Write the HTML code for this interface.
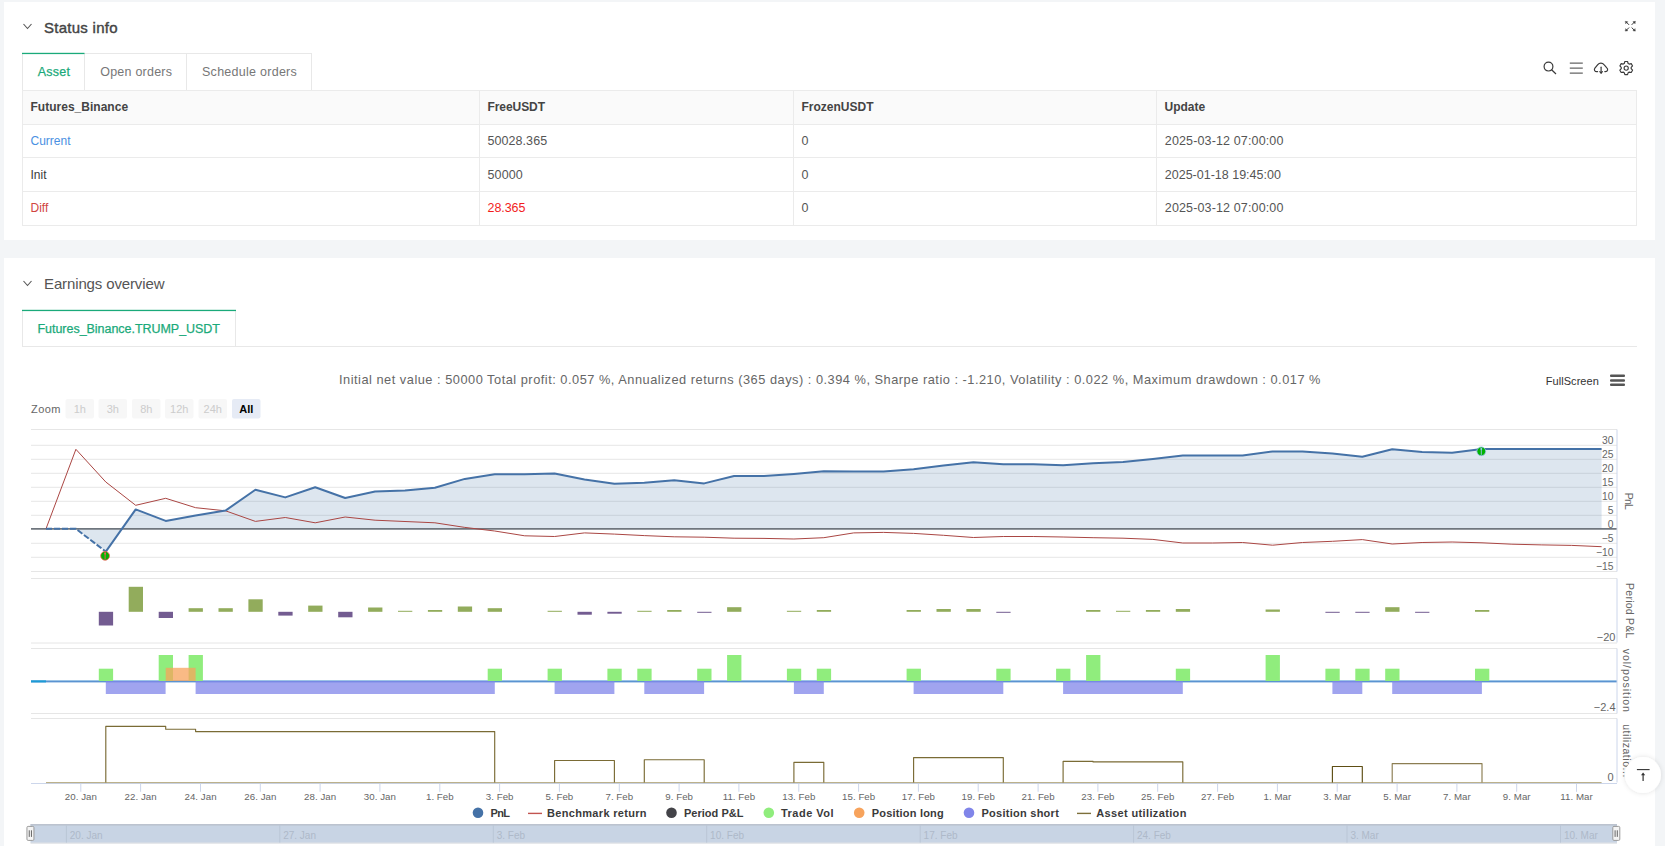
<!DOCTYPE html>
<html><head><meta charset="utf-8"><style>
html,body{margin:0;padding:0;}
body{width:1665px;height:846px;overflow:hidden;background:#f3f5f7;position:relative;font-family:"Liberation Sans",sans-serif;}
.card{position:absolute;background:#fff;}
svg{position:absolute;left:0;top:0;}
text{font-family:"Liberation Sans",sans-serif;}
</style></head><body>
<div class="card" style="left:4px;top:2px;width:1651px;height:238px"></div>
<div class="card" style="left:4px;top:258px;width:1651px;height:600px"></div>
<svg width="1665" height="846" viewBox="0 0 1665 846">
<path d="M23.5 24 L27.5 28.5 L31.5 24" fill="none" stroke="#555" stroke-width="1.1"/>
<text x="44" y="33.2" font-size="15" fill="#444" font-weight="normal" text-anchor="start" stroke="#444" stroke-width="0.4" textLength="73.5" lengthAdjust="spacing">Status info</text>
<g stroke="#3a3a3a" stroke-width="1" fill="#3a3a3a" stroke-linecap="round"><path d="M1628.8 24.6 L1626.3 22.1" fill="none"/><path d="M1625.6 21.4 L1627.7 21.7 L1625.9 23.5Z" stroke-width="0.5"/><path d="M1631.9 24.6 L1634.4 22.1" fill="none"/><path d="M1635.1 21.4 L1633.0 21.7 L1634.8 23.5Z" stroke-width="0.5"/><path d="M1628.8 27.8 L1626.3 30.3" fill="none"/><path d="M1625.6 31.0 L1627.7 30.7 L1625.9 28.9Z" stroke-width="0.5"/><path d="M1631.9 27.8 L1634.4 30.3" fill="none"/><path d="M1635.1 31.0 L1633.0 30.7 L1634.8 28.9Z" stroke-width="0.5"/></g>
<rect x="22.5" y="53.5" width="289" height="37" fill="#fff" stroke="#e8e8e8"/>
<line x1="84.5" y1="53" x2="84.5" y2="90" stroke="#e8e8e8"/>
<line x1="186.5" y1="53" x2="186.5" y2="90" stroke="#e8e8e8"/>
<rect x="22" y="52.8" width="62.5" height="1.3" fill="#1aaa7a"/>
<text x="37.8" y="76" font-size="12.5" fill="#1aaa7a" font-weight="normal" text-anchor="start" stroke="#1aaa7a" stroke-width="0.25" textLength="32.2" lengthAdjust="spacing">Asset</text>
<text x="100.2" y="76" font-size="12.5" fill="#777" font-weight="normal" text-anchor="start"  textLength="71.8" lengthAdjust="spacing">Open orders</text>
<text x="202" y="76" font-size="12.5" fill="#777" font-weight="normal" text-anchor="start"  textLength="94.8" lengthAdjust="spacing">Schedule orders</text>
<g stroke="#3a3a3a" stroke-width="1.2" fill="none"><circle cx="1548.5" cy="66.6" r="4.4"/><path d="M1551.6 69.8 L1556 74"/></g><g stroke="#666" stroke-width="1.3"><path d="M1569.8 63.1 h13 M1569.8 68.1 h13 M1569.8 73.1 h13"/></g><g stroke="#3a3a3a" stroke-width="1.2" fill="none" stroke-linecap="round"><path d="M1597.6 71.6 H1596.8 C1594.6 71.6 1593.8 69.6 1594.9 68.2 L1597.8 64.6 C1599.4 62.6 1602.4 62.6 1604 64.6 L1606.6 67.6 C1608.4 69.2 1607.8 71.6 1605.4 71.6 H1604.8"/><path d="M1601.1 67.2 V73" /><path d="M1599.8 71.6 L1601.1 73 L1602.4 71.6"/></g>
<path d="M1624.87 61.53 L1627.53 61.53 L1628.15 63.49 L1629.21 64.11 L1631.22 63.66 L1632.55 65.97 L1631.16 67.48 L1631.16 68.72 L1632.55 70.23 L1631.22 72.54 L1629.21 72.09 L1628.15 72.71 L1627.53 74.67 L1624.87 74.67 L1624.25 72.71 L1623.19 72.09 L1621.18 72.54 L1619.85 70.23 L1621.24 68.72 L1621.24 67.48 L1619.85 65.97 L1621.18 63.66 L1623.19 64.11 L1624.25 63.49Z" fill="none" stroke="#3a3a3a" stroke-width="1.15" stroke-linejoin="round"/><circle cx="1626.2" cy="68.1" r="2.1" fill="none" stroke="#3a3a3a" stroke-width="1.1"/>
<rect x="22.5" y="90.5" width="1614" height="135" fill="#fff" stroke="#ebebeb"/>
<rect x="23" y="91" width="1613" height="33" fill="#fafafa"/>
<line x1="22" y1="124.5" x2="1637" y2="124.5" stroke="#ebebeb"/>
<line x1="22" y1="157.5" x2="1637" y2="157.5" stroke="#ebebeb"/>
<line x1="22" y1="191.5" x2="1637" y2="191.5" stroke="#ebebeb"/>
<line x1="479.5" y1="90" x2="479.5" y2="225" stroke="#ebebeb"/>
<line x1="793.5" y1="90" x2="793.5" y2="225" stroke="#ebebeb"/>
<line x1="1156.5" y1="90" x2="1156.5" y2="225" stroke="#ebebeb"/>
<text x="30.5" y="111" font-size="12" fill="#444" font-weight="bold" text-anchor="start"  textLength="97.6" lengthAdjust="spacing">Futures_Binance</text>
<text x="487.5" y="111" font-size="12" fill="#444" font-weight="bold" text-anchor="start"  textLength="57.5" lengthAdjust="spacing">FreeUSDT</text>
<text x="801.5" y="111" font-size="12" fill="#444" font-weight="bold" text-anchor="start" >FrozenUSDT</text>
<text x="1164.5" y="111" font-size="12" fill="#444" font-weight="bold" text-anchor="start" >Update</text>
<text x="30.5" y="145" font-size="12" fill="#4a90e2" font-weight="normal" text-anchor="start" >Current</text>
<text x="487.5" y="145" font-size="12.5" fill="#555" font-weight="normal" text-anchor="start"  textLength="59.6" lengthAdjust="spacing">50028.365</text>
<text x="801.5" y="145" font-size="12.5" fill="#555" font-weight="normal" text-anchor="start" >0</text>
<text x="30.5" y="179" font-size="12" fill="#3a3a3a" font-weight="normal" text-anchor="start" >Init</text>
<text x="487.5" y="179" font-size="12.5" fill="#555" font-weight="normal" text-anchor="start"  textLength="35.3" lengthAdjust="spacing">50000</text>
<text x="801.5" y="179" font-size="12.5" fill="#555" font-weight="normal" text-anchor="start" >0</text>
<text x="30.5" y="212" font-size="12" fill="#d0453f" font-weight="normal" text-anchor="start" >Diff</text>
<text x="487.5" y="212" font-size="12.5" fill="#f21d1d" font-weight="normal" text-anchor="start"  textLength="37.9" lengthAdjust="spacing">28.365</text>
<text x="801.5" y="212" font-size="12.5" fill="#555" font-weight="normal" text-anchor="start" >0</text>
<text x="1164.8" y="145" font-size="12.5" fill="#555" font-weight="normal" text-anchor="start"  textLength="118.6" lengthAdjust="spacing">2025-03-12 07:00:00</text>
<text x="1164.8" y="179" font-size="12.5" fill="#555" font-weight="normal" text-anchor="start" >2025-01-18 19:45:00</text>
<text x="1164.8" y="212" font-size="12.5" fill="#555" font-weight="normal" text-anchor="start"  textLength="118.6" lengthAdjust="spacing">2025-03-12 07:00:00</text>
<path d="M23.5 281 L27.5 285.5 L31.5 281" fill="none" stroke="#555" stroke-width="1.1"/>
<text x="44" y="289" font-size="15" fill="#555" font-weight="normal" text-anchor="start"  textLength="120.5" lengthAdjust="spacing">Earnings overview</text>
<line x1="22" y1="346.5" x2="1637" y2="346.5" stroke="#e8e8e8"/>
<rect x="22.5" y="310.5" width="213" height="36" fill="#fff" stroke="#e8e8e8"/>
<rect x="22" y="309.8" width="214" height="1.3" fill="#1aaa7a"/>
<text x="37.5" y="333" font-size="12.5" fill="#1aaa7a" font-weight="normal" text-anchor="start" stroke="#1aaa7a" stroke-width="0.25" textLength="182.5" lengthAdjust="spacing">Futures_Binance.TRUMP_USDT</text>
<text x="339" y="384" font-size="12.8" fill="#666" font-weight="normal" text-anchor="start"  textLength="981.5" lengthAdjust="spacing">Initial net value : 50000 Total profit: 0.057 %, Annualized returns (365 days) : 0.394 %, Sharpe ratio : -1.210, Volatility : 0.022 %, Maximum drawdown : 0.017 %</text>
<text x="1545.8" y="385" font-size="11" fill="#333" font-weight="normal" text-anchor="start"  textLength="53" lengthAdjust="spacing">FullScreen</text>
<g fill="#555"><rect x="1610" y="374.5" width="15" height="2.6" rx="1"/><rect x="1610" y="379.2" width="15" height="2.6" rx="1"/><rect x="1610" y="383.4" width="15" height="2.6" rx="1"/></g>
<text x="31" y="413" font-size="11" fill="#666" font-weight="normal" text-anchor="start"  textLength="29.5" lengthAdjust="spacing">Zoom</text>
<rect x="65.5" y="399" width="28.5" height="19.5" rx="2" fill="#f7f7f7"/>
<text x="79.75" y="413" font-size="11" fill="#ccc" font-weight="normal" text-anchor="middle" >1h</text>
<rect x="98.5" y="399" width="28.5" height="19.5" rx="2" fill="#f7f7f7"/>
<text x="112.75" y="413" font-size="11" fill="#ccc" font-weight="normal" text-anchor="middle" >3h</text>
<rect x="132" y="399" width="28.5" height="19.5" rx="2" fill="#f7f7f7"/>
<text x="146.25" y="413" font-size="11" fill="#ccc" font-weight="normal" text-anchor="middle" >8h</text>
<rect x="165" y="399" width="28.5" height="19.5" rx="2" fill="#f7f7f7"/>
<text x="179.25" y="413" font-size="11" fill="#ccc" font-weight="normal" text-anchor="middle" >12h</text>
<rect x="198.5" y="399" width="28.5" height="19.5" rx="2" fill="#f7f7f7"/>
<text x="212.75" y="413" font-size="11" fill="#ccc" font-weight="normal" text-anchor="middle" >24h</text>
<rect x="232" y="399" width="28.5" height="19.5" rx="2" fill="#e6ebf5"/>
<text x="246.25" y="413" font-size="11" fill="#000" font-weight="bold" text-anchor="middle" >All</text>
<path d="M31 429.5 H1617 M31 571.5 H1617" stroke="#e6e6e6"/>
<line x1="31" y1="445.3" x2="1617" y2="445.3" stroke="#e6e6e6"/>
<line x1="31" y1="459.3" x2="1617" y2="459.3" stroke="#e6e6e6"/>
<line x1="31" y1="473.3" x2="1617" y2="473.3" stroke="#e6e6e6"/>
<line x1="31" y1="487.3" x2="1617" y2="487.3" stroke="#e6e6e6"/>
<line x1="31" y1="501.3" x2="1617" y2="501.3" stroke="#e6e6e6"/>
<line x1="31" y1="515.3" x2="1617" y2="515.3" stroke="#e6e6e6"/>
<line x1="31" y1="543.3" x2="1617" y2="543.3" stroke="#e6e6e6"/>
<line x1="31" y1="557.3" x2="1617" y2="557.3" stroke="#e6e6e6"/>
<polygon points="46.0,528.8 46.0,528.8 75.9,528.8 105.8,551.6 135.7,509.4 165.7,520.9 195.6,515.6 225.5,510.6 255.4,489.7 285.3,497.4 315.2,487.3 345.2,498.0 375.1,491.6 405.0,490.5 434.9,487.7 464.8,478.9 494.7,474.3 524.7,474.3 554.6,473.6 584.5,479.6 614.4,483.7 644.3,482.7 674.2,480.3 704.2,483.4 734.1,476.0 764.0,476.0 793.9,473.9 823.8,471.2 853.7,471.4 883.6,471.4 913.6,469.2 943.5,465.6 973.4,462.3 1003.3,464.2 1033.2,464.2 1063.1,465.2 1093.1,463.2 1123.0,462.0 1152.9,458.9 1182.8,455.4 1212.7,455.6 1242.6,455.6 1272.6,451.5 1302.5,451.5 1332.4,453.6 1362.3,456.8 1392.2,449.3 1422.1,452.0 1452.1,452.7 1482.0,449.0 1511.9,449.0 1541.8,449.0 1571.7,449.0 1601.6,449.0 1601.6,528.8" fill="#4572a7" fill-opacity="0.18"/>
<line x1="31" y1="528.8" x2="1617" y2="528.8" stroke="#6f767e" stroke-width="1.8"/>
<polyline points="46.0,528.8 75.9,449.3 105.8,482.0 135.7,505.3 165.7,498.3 195.6,507.7 225.5,510.8 255.4,521.4 285.3,517.5 315.2,522.8 345.2,517.0 375.1,520.2 405.0,521.5 434.9,522.8 464.8,527.4 494.7,531.0 524.7,535.8 554.6,536.5 584.5,532.9 614.4,534.1 644.3,535.6 674.2,536.8 704.2,537.2 734.1,538.2 764.0,538.4 793.9,539.0 823.8,537.7 853.7,532.9 883.6,532.4 913.6,533.4 943.5,535.3 973.4,537.5 1003.3,536.5 1033.2,536.5 1063.1,537.0 1093.1,537.7 1123.0,538.2 1152.9,539.4 1182.8,543.0 1212.7,543.0 1242.6,542.5 1272.6,545.2 1302.5,542.5 1332.4,541.3 1362.3,539.6 1392.2,544.0 1422.1,542.5 1452.1,542.0 1482.0,542.8 1511.9,544.2 1541.8,544.9 1571.7,545.4 1601.6,546.7" fill="none" stroke="#aa4643" stroke-width="1"/>
<polyline points="46.0,528.8 75.9,528.8 105.8,551.6" fill="none" stroke="#4572a7" stroke-width="2" stroke-dasharray="6,2"/>
<polyline points="105.8,551.6 135.7,509.4 165.7,520.9 195.6,515.6 225.5,510.6 255.4,489.7 285.3,497.4 315.2,487.3 345.2,498.0 375.1,491.6 405.0,490.5 434.9,487.7 464.8,478.9 494.7,474.3 524.7,474.3 554.6,473.6 584.5,479.6 614.4,483.7 644.3,482.7 674.2,480.3 704.2,483.4 734.1,476.0 764.0,476.0 793.9,473.9 823.8,471.2 853.7,471.4 883.6,471.4 913.6,469.2 943.5,465.6 973.4,462.3 1003.3,464.2 1033.2,464.2 1063.1,465.2 1093.1,463.2 1123.0,462.0 1152.9,458.9 1182.8,455.4 1212.7,455.6 1242.6,455.6 1272.6,451.5 1302.5,451.5 1332.4,453.6 1362.3,456.8 1392.2,449.3 1422.1,452.0 1452.1,452.7 1482.0,449.0 1511.9,449.0 1541.8,449.0 1571.7,449.0 1601.6,449.0" fill="none" stroke="#4572a7" stroke-width="2" stroke-linejoin="round"/>
<circle cx="105.1" cy="555.8" r="4.4" fill="#00b300" stroke="#ff5a5a" stroke-width="0.8"/><line x1="105.1" y1="552.3" x2="105.1" y2="559.3" stroke="#ff5a5a" stroke-width="0.9"/><circle cx="105.1" cy="553.5" r="0.9" fill="#ff5a5a"/>
<circle cx="1481.3" cy="451.3" r="4.4" fill="#00b300" stroke="#9cc0f0" stroke-width="0.8"/><line x1="1481.3" y1="447.8" x2="1481.3" y2="454.8" stroke="#9cc0f0" stroke-width="0.9"/><circle cx="1481.3" cy="449.0" r="0.9" fill="#9cc0f0"/>
<text x="1613.5" y="443.59999999999997" font-size="10.3" fill="#666" font-weight="normal" text-anchor="end" >30</text>
<text x="1613.5" y="457.59999999999997" font-size="10.3" fill="#666" font-weight="normal" text-anchor="end" >25</text>
<text x="1613.5" y="471.59999999999997" font-size="10.3" fill="#666" font-weight="normal" text-anchor="end" >20</text>
<text x="1613.5" y="485.59999999999997" font-size="10.3" fill="#666" font-weight="normal" text-anchor="end" >15</text>
<text x="1613.5" y="499.59999999999997" font-size="10.3" fill="#666" font-weight="normal" text-anchor="end" >10</text>
<text x="1613.5" y="513.5999999999999" font-size="10.3" fill="#666" font-weight="normal" text-anchor="end" >5</text>
<text x="1613.5" y="527.5999999999999" font-size="10.3" fill="#666" font-weight="normal" text-anchor="end" >0</text>
<text x="1613.5" y="541.5999999999999" font-size="10.3" fill="#666" font-weight="normal" text-anchor="end" >−5</text>
<text x="1613.5" y="555.5999999999999" font-size="10.3" fill="#666" font-weight="normal" text-anchor="end" >−10</text>
<text x="1613.5" y="569.5999999999999" font-size="10.3" fill="#666" font-weight="normal" text-anchor="end" >−15</text>
<line x1="1617" y1="429.5" x2="1617" y2="571.5" stroke="#ccd6eb"/>
<text x="1629" y="501.3" font-size="10.5" fill="#666" font-weight="normal" text-anchor="middle" transform="rotate(90 1629 501.3)" dy="3.8" textLength="17.3" lengthAdjust="spacing">PnL</text>
<path d="M31 578.5 H1617 M31 643 H1617" stroke="#e6e6e6"/>
<rect x="98.8" y="611.8" width="14.3" height="13.7" fill="#735c91"/>
<rect x="128.7" y="586.8" width="14.3" height="25.0" fill="#89a54e" fill-opacity="0.92"/>
<rect x="158.7" y="611.8" width="14.3" height="6.2" fill="#735c91"/>
<rect x="188.6" y="608.2" width="14.3" height="3.6" fill="#89a54e" fill-opacity="0.92"/>
<rect x="218.5" y="608.2" width="14.3" height="3.6" fill="#89a54e" fill-opacity="0.92"/>
<rect x="248.4" y="599.3" width="14.3" height="12.5" fill="#89a54e" fill-opacity="0.92"/>
<rect x="278.3" y="611.8" width="14.3" height="3.8" fill="#735c91"/>
<rect x="308.2" y="605.6" width="14.3" height="6.2" fill="#89a54e" fill-opacity="0.92"/>
<rect x="338.2" y="611.8" width="14.3" height="5.5" fill="#735c91"/>
<rect x="368.1" y="607.5" width="14.3" height="4.3" fill="#89a54e" fill-opacity="0.92"/>
<rect x="398.0" y="610.8" width="14.3" height="1.0" fill="#89a54e" fill-opacity="0.92"/>
<rect x="427.9" y="610.0" width="14.3" height="1.8" fill="#89a54e" fill-opacity="0.92"/>
<rect x="457.8" y="606.5" width="14.3" height="5.3" fill="#89a54e" fill-opacity="0.92"/>
<rect x="487.7" y="608.2" width="14.3" height="3.6" fill="#89a54e" fill-opacity="0.92"/>
<rect x="547.6" y="610.8" width="14.3" height="1.0" fill="#89a54e" fill-opacity="0.92"/>
<rect x="577.5" y="611.8" width="14.3" height="2.9" fill="#735c91"/>
<rect x="607.4" y="611.8" width="14.3" height="1.9" fill="#735c91"/>
<rect x="637.3" y="610.8" width="14.3" height="1.0" fill="#89a54e" fill-opacity="0.92"/>
<rect x="667.2" y="610.0" width="14.3" height="1.8" fill="#89a54e" fill-opacity="0.92"/>
<rect x="697.2" y="611.8" width="14.3" height="1.0" fill="#735c91"/>
<rect x="727.1" y="607.2" width="14.3" height="4.6" fill="#89a54e" fill-opacity="0.92"/>
<rect x="786.9" y="610.8" width="14.3" height="1.0" fill="#89a54e" fill-opacity="0.92"/>
<rect x="816.8" y="610.0" width="14.3" height="1.8" fill="#89a54e" fill-opacity="0.92"/>
<rect x="906.6" y="610.0" width="14.3" height="1.8" fill="#89a54e" fill-opacity="0.92"/>
<rect x="936.5" y="609.0" width="14.3" height="2.8" fill="#89a54e" fill-opacity="0.92"/>
<rect x="966.4" y="609.0" width="14.3" height="2.8" fill="#89a54e" fill-opacity="0.92"/>
<rect x="996.3" y="611.8" width="14.3" height="1.0" fill="#735c91"/>
<rect x="1086.1" y="610.0" width="14.3" height="1.8" fill="#89a54e" fill-opacity="0.92"/>
<rect x="1116.0" y="610.8" width="14.3" height="1.0" fill="#89a54e" fill-opacity="0.92"/>
<rect x="1145.9" y="610.0" width="14.3" height="1.8" fill="#89a54e" fill-opacity="0.92"/>
<rect x="1175.8" y="609.0" width="14.3" height="2.8" fill="#89a54e" fill-opacity="0.92"/>
<rect x="1265.6" y="609.5" width="14.3" height="2.3" fill="#89a54e" fill-opacity="0.92"/>
<rect x="1325.4" y="611.8" width="14.3" height="1.0" fill="#735c91"/>
<rect x="1355.3" y="611.8" width="14.3" height="1.0" fill="#735c91"/>
<rect x="1385.2" y="607.2" width="14.3" height="4.6" fill="#89a54e" fill-opacity="0.92"/>
<rect x="1415.1" y="611.8" width="14.3" height="1.0" fill="#735c91"/>
<rect x="1475.0" y="610.0" width="14.3" height="1.8" fill="#89a54e" fill-opacity="0.92"/>
<line x1="1617" y1="578.5" x2="1617" y2="642.5" stroke="#ccd6eb"/>
<text x="1615.5" y="641" font-size="11" fill="#666" font-weight="normal" text-anchor="end" >−20</text>
<text x="1629.7" y="610.7" font-size="10.5" fill="#666" font-weight="normal" text-anchor="middle" transform="rotate(90 1629.7 610.7)" dy="3.8" textLength="55.2" lengthAdjust="spacing">Period P&amp;L</text>
<path d="M31 648.5 H1617 M31 713.5 H1617" stroke="#e6e6e6"/>
<rect x="31" y="680.4" width="1586" height="2" fill="#5b93d1"/><rect x="31" y="680" width="1586" height="0.6" fill="#9fd0ec" fill-opacity="0.6"/><rect x="31" y="680.4" width="15" height="2" fill="#1c9bd6"/>
<rect x="98.8" y="668.7" width="14.3" height="12.3" fill="#90ed7d"/>
<rect x="158.7" y="655.0" width="14.3" height="26.0" fill="#90ed7d"/>
<rect x="188.6" y="655.0" width="14.3" height="26.0" fill="#90ed7d"/>
<rect x="487.7" y="668.7" width="14.3" height="12.3" fill="#90ed7d"/>
<rect x="547.6" y="668.7" width="14.3" height="12.3" fill="#90ed7d"/>
<rect x="607.4" y="668.7" width="14.3" height="12.3" fill="#90ed7d"/>
<rect x="637.3" y="668.7" width="14.3" height="12.3" fill="#90ed7d"/>
<rect x="697.2" y="668.7" width="14.3" height="12.3" fill="#90ed7d"/>
<rect x="727.1" y="655.0" width="14.3" height="26.0" fill="#90ed7d"/>
<rect x="786.9" y="668.7" width="14.3" height="12.3" fill="#90ed7d"/>
<rect x="816.8" y="668.7" width="14.3" height="12.3" fill="#90ed7d"/>
<rect x="906.6" y="668.7" width="14.3" height="12.3" fill="#90ed7d"/>
<rect x="996.3" y="668.7" width="14.3" height="12.3" fill="#90ed7d"/>
<rect x="1056.1" y="668.7" width="14.3" height="12.3" fill="#90ed7d"/>
<rect x="1086.1" y="655.0" width="14.3" height="26.0" fill="#90ed7d"/>
<rect x="1175.8" y="668.7" width="14.3" height="12.3" fill="#90ed7d"/>
<rect x="1265.6" y="655.0" width="14.3" height="26.0" fill="#90ed7d"/>
<rect x="1325.4" y="668.7" width="14.3" height="12.3" fill="#90ed7d"/>
<rect x="1355.3" y="668.7" width="14.3" height="12.3" fill="#90ed7d"/>
<rect x="1385.2" y="668.7" width="14.3" height="12.3" fill="#90ed7d"/>
<rect x="1475.0" y="668.7" width="14.3" height="12.3" fill="#90ed7d"/>
<rect x="165.7" y="667.8" width="29.9" height="13.2" fill="#f7a35c" fill-opacity="0.75"/>
<rect x="105.8" y="681.0" width="59.8" height="13" fill="#8085e9" fill-opacity="0.75"/>
<rect x="195.6" y="681.0" width="299.2" height="13" fill="#8085e9" fill-opacity="0.75"/>
<rect x="554.6" y="681.0" width="59.8" height="13" fill="#8085e9" fill-opacity="0.75"/>
<rect x="644.3" y="681.0" width="59.8" height="13" fill="#8085e9" fill-opacity="0.75"/>
<rect x="793.9" y="681.0" width="29.9" height="13" fill="#8085e9" fill-opacity="0.75"/>
<rect x="913.6" y="681.0" width="89.7" height="13" fill="#8085e9" fill-opacity="0.75"/>
<rect x="1063.1" y="681.0" width="119.7" height="13" fill="#8085e9" fill-opacity="0.75"/>
<rect x="1332.4" y="681.0" width="29.9" height="13" fill="#8085e9" fill-opacity="0.75"/>
<rect x="1392.2" y="681.0" width="89.7" height="13" fill="#8085e9" fill-opacity="0.75"/>
<line x1="1617" y1="648.5" x2="1617" y2="713.5" stroke="#ccd6eb"/>
<text x="1615.5" y="711" font-size="11" fill="#666" font-weight="normal" text-anchor="end" >−2.4</text>
<text x="1626.5" y="680.3" font-size="10.5" fill="#666" font-weight="normal" text-anchor="middle" transform="rotate(90 1626.5 680.3)" dy="3.8" textLength="63.2" lengthAdjust="spacing">vol/position</text>
<path d="M31 718.5 H1617" stroke="#e6e6e6"/>
<line x1="31" y1="783.5" x2="1617" y2="783.5" stroke="#ccd6eb"/>
<line x1="46.0" y1="782.6" x2="1601.6" y2="782.6" stroke="#b5a97f" stroke-width="1"/>
<path d="M105.8 782.5 L105.8 726.3 L165.7 726.3 L165.7 729.2 L195.6 729.2 L195.6 731.6 L494.7 731.6 L494.7 782.5" fill="none" stroke="#7a6b35" stroke-width="1.15" stroke-linejoin="round"/>
<path d="M554.6 782.5 L554.6 760.5 L614.4 760.5 L614.4 782.5" fill="none" stroke="#7a6b35" stroke-width="1.15" stroke-linejoin="round"/>
<path d="M644.3 782.5 L644.3 759.7 L704.2 759.7 L704.2 782.5" fill="none" stroke="#7a6b35" stroke-width="1.15" stroke-linejoin="round"/>
<path d="M793.9 782.5 L793.9 762.4 L823.8 762.4 L823.8 782.5" fill="none" stroke="#7a6b35" stroke-width="1.15" stroke-linejoin="round"/>
<path d="M913.6 782.5 L913.6 757.6 L1003.3 757.6 L1003.3 782.5" fill="none" stroke="#7a6b35" stroke-width="1.15" stroke-linejoin="round"/>
<path d="M1063.1 782.5 L1063.1 761.4 L1093.1 761.4 L1093.1 761.9 L1182.8 761.9 L1182.8 782.5" fill="none" stroke="#7a6b35" stroke-width="1.15" stroke-linejoin="round"/>
<path d="M1332.4 782.5 L1332.4 766.5 L1362.3 766.5 L1362.3 782.5" fill="none" stroke="#5e4e14" stroke-width="1.15" stroke-linejoin="round"/>
<path d="M1392.2 782.5 L1392.2 763.6 L1482.0 763.6 L1482.0 782.5" fill="none" stroke="#8c7e52" stroke-width="1.15" stroke-linejoin="round"/>
<line x1="1617" y1="718.5" x2="1617" y2="782.5" stroke="#ccd6eb"/>
<text x="1613.5" y="781" font-size="11" fill="#666" font-weight="normal" text-anchor="end" >0</text>
<text x="1626.6" y="750.8" font-size="10.5" fill="#666" font-weight="normal" text-anchor="middle" transform="rotate(90 1626.6 750.8)" dy="3.8" textLength="53.2" lengthAdjust="spacing">utilizatio...</text>
<line x1="80.8" y1="784" x2="80.8" y2="791.8" stroke="#ccd6eb"/>
<text x="80.8" y="800" font-size="9.7" fill="#666" font-weight="normal" text-anchor="middle"  textLength="32.1" lengthAdjust="spacing">20. Jan</text>
<line x1="140.6" y1="784" x2="140.6" y2="791.8" stroke="#ccd6eb"/>
<text x="140.6" y="800" font-size="9.7" fill="#666" font-weight="normal" text-anchor="middle"  textLength="32.1" lengthAdjust="spacing">22. Jan</text>
<line x1="200.5" y1="784" x2="200.5" y2="791.8" stroke="#ccd6eb"/>
<text x="200.5" y="800" font-size="9.7" fill="#666" font-weight="normal" text-anchor="middle"  textLength="32.1" lengthAdjust="spacing">24. Jan</text>
<line x1="260.3" y1="784" x2="260.3" y2="791.8" stroke="#ccd6eb"/>
<text x="260.3" y="800" font-size="9.7" fill="#666" font-weight="normal" text-anchor="middle"  textLength="32.1" lengthAdjust="spacing">26. Jan</text>
<line x1="320.1" y1="784" x2="320.1" y2="791.8" stroke="#ccd6eb"/>
<text x="320.1" y="800" font-size="9.7" fill="#666" font-weight="normal" text-anchor="middle"  textLength="32.1" lengthAdjust="spacing">28. Jan</text>
<line x1="379.9" y1="784" x2="379.9" y2="791.8" stroke="#ccd6eb"/>
<text x="379.9" y="800" font-size="9.7" fill="#666" font-weight="normal" text-anchor="middle"  textLength="32.1" lengthAdjust="spacing">30. Jan</text>
<line x1="439.8" y1="784" x2="439.8" y2="791.8" stroke="#ccd6eb"/>
<text x="439.8" y="800" font-size="9.7" fill="#666" font-weight="normal" text-anchor="middle"  textLength="27.7" lengthAdjust="spacing">1. Feb</text>
<line x1="499.6" y1="784" x2="499.6" y2="791.8" stroke="#ccd6eb"/>
<text x="499.6" y="800" font-size="9.7" fill="#666" font-weight="normal" text-anchor="middle"  textLength="27.7" lengthAdjust="spacing">3. Feb</text>
<line x1="559.4" y1="784" x2="559.4" y2="791.8" stroke="#ccd6eb"/>
<text x="559.4" y="800" font-size="9.7" fill="#666" font-weight="normal" text-anchor="middle"  textLength="27.7" lengthAdjust="spacing">5. Feb</text>
<line x1="619.3" y1="784" x2="619.3" y2="791.8" stroke="#ccd6eb"/>
<text x="619.3" y="800" font-size="9.7" fill="#666" font-weight="normal" text-anchor="middle"  textLength="27.7" lengthAdjust="spacing">7. Feb</text>
<line x1="679.1" y1="784" x2="679.1" y2="791.8" stroke="#ccd6eb"/>
<text x="679.1" y="800" font-size="9.7" fill="#666" font-weight="normal" text-anchor="middle"  textLength="27.7" lengthAdjust="spacing">9. Feb</text>
<line x1="738.9" y1="784" x2="738.9" y2="791.8" stroke="#ccd6eb"/>
<text x="738.9" y="800" font-size="9.7" fill="#666" font-weight="normal" text-anchor="middle"  textLength="32.5" lengthAdjust="spacing">11. Feb</text>
<line x1="798.8" y1="784" x2="798.8" y2="791.8" stroke="#ccd6eb"/>
<text x="798.8" y="800" font-size="9.7" fill="#666" font-weight="normal" text-anchor="middle"  textLength="33.2" lengthAdjust="spacing">13. Feb</text>
<line x1="858.6" y1="784" x2="858.6" y2="791.8" stroke="#ccd6eb"/>
<text x="858.6" y="800" font-size="9.7" fill="#666" font-weight="normal" text-anchor="middle"  textLength="33.2" lengthAdjust="spacing">15. Feb</text>
<line x1="918.4" y1="784" x2="918.4" y2="791.8" stroke="#ccd6eb"/>
<text x="918.4" y="800" font-size="9.7" fill="#666" font-weight="normal" text-anchor="middle"  textLength="33.2" lengthAdjust="spacing">17. Feb</text>
<line x1="978.2" y1="784" x2="978.2" y2="791.8" stroke="#ccd6eb"/>
<text x="978.2" y="800" font-size="9.7" fill="#666" font-weight="normal" text-anchor="middle"  textLength="33.2" lengthAdjust="spacing">19. Feb</text>
<line x1="1038.1" y1="784" x2="1038.1" y2="791.8" stroke="#ccd6eb"/>
<text x="1038.1" y="800" font-size="9.7" fill="#666" font-weight="normal" text-anchor="middle"  textLength="33.2" lengthAdjust="spacing">21. Feb</text>
<line x1="1097.9" y1="784" x2="1097.9" y2="791.8" stroke="#ccd6eb"/>
<text x="1097.9" y="800" font-size="9.7" fill="#666" font-weight="normal" text-anchor="middle"  textLength="33.2" lengthAdjust="spacing">23. Feb</text>
<line x1="1157.7" y1="784" x2="1157.7" y2="791.8" stroke="#ccd6eb"/>
<text x="1157.7" y="800" font-size="9.7" fill="#666" font-weight="normal" text-anchor="middle"  textLength="33.2" lengthAdjust="spacing">25. Feb</text>
<line x1="1217.6" y1="784" x2="1217.6" y2="791.8" stroke="#ccd6eb"/>
<text x="1217.6" y="800" font-size="9.7" fill="#666" font-weight="normal" text-anchor="middle"  textLength="33.2" lengthAdjust="spacing">27. Feb</text>
<line x1="1277.4" y1="784" x2="1277.4" y2="791.8" stroke="#ccd6eb"/>
<text x="1277.4" y="800" font-size="9.7" fill="#666" font-weight="normal" text-anchor="middle"  textLength="27.7" lengthAdjust="spacing">1. Mar</text>
<line x1="1337.2" y1="784" x2="1337.2" y2="791.8" stroke="#ccd6eb"/>
<text x="1337.2" y="800" font-size="9.7" fill="#666" font-weight="normal" text-anchor="middle"  textLength="27.7" lengthAdjust="spacing">3. Mar</text>
<line x1="1397.1" y1="784" x2="1397.1" y2="791.8" stroke="#ccd6eb"/>
<text x="1397.1" y="800" font-size="9.7" fill="#666" font-weight="normal" text-anchor="middle"  textLength="27.7" lengthAdjust="spacing">5. Mar</text>
<line x1="1456.9" y1="784" x2="1456.9" y2="791.8" stroke="#ccd6eb"/>
<text x="1456.9" y="800" font-size="9.7" fill="#666" font-weight="normal" text-anchor="middle"  textLength="27.7" lengthAdjust="spacing">7. Mar</text>
<line x1="1516.7" y1="784" x2="1516.7" y2="791.8" stroke="#ccd6eb"/>
<text x="1516.7" y="800" font-size="9.7" fill="#666" font-weight="normal" text-anchor="middle"  textLength="27.7" lengthAdjust="spacing">9. Mar</text>
<line x1="1576.5" y1="784" x2="1576.5" y2="791.8" stroke="#ccd6eb"/>
<text x="1576.5" y="800" font-size="9.7" fill="#666" font-weight="normal" text-anchor="middle"  textLength="32.4" lengthAdjust="spacing">11. Mar</text>
<circle cx="478" cy="812.8" r="5.3" fill="#4572a7"/>
<text x="490.5" y="817" font-size="11" fill="#3a3a3a" font-weight="bold" text-anchor="start"  textLength="19.6" lengthAdjust="spacing">PnL</text>
<line x1="528" y1="813.4" x2="542" y2="813.4" stroke="#c25450" stroke-width="1.4"/>
<text x="547" y="817" font-size="11" fill="#3a3a3a" font-weight="bold" text-anchor="start"  textLength="99.6" lengthAdjust="spacing">Benchmark return</text>
<circle cx="671.5" cy="812.8" r="5.3" fill="#434348"/>
<text x="684" y="817" font-size="11" fill="#3a3a3a" font-weight="bold" text-anchor="start"  textLength="59.5" lengthAdjust="spacing">Period P&amp;L</text>
<circle cx="768.8" cy="812.8" r="5.3" fill="#90ed7d"/>
<text x="781" y="817" font-size="11" fill="#3a3a3a" font-weight="bold" text-anchor="start"  textLength="52.5" lengthAdjust="spacing">Trade Vol</text>
<circle cx="859.2" cy="812.8" r="5.3" fill="#f7a35c"/>
<text x="871.7" y="817" font-size="11" fill="#3a3a3a" font-weight="bold" text-anchor="start"  textLength="72" lengthAdjust="spacing">Position long</text>
<circle cx="969" cy="812.8" r="5.3" fill="#8085e9"/>
<text x="981.5" y="817" font-size="11" fill="#3a3a3a" font-weight="bold" text-anchor="start"  textLength="77.3" lengthAdjust="spacing">Position short</text>
<line x1="1077" y1="813.4" x2="1091" y2="813.4" stroke="#7d6f3a" stroke-width="1.4"/>
<text x="1096.3" y="817" font-size="11" fill="#3a3a3a" font-weight="bold" text-anchor="start"  textLength="90.1" lengthAdjust="spacing">Asset utilization</text>
<rect x="30.5" y="824.3" width="1586.5" height="18.5" fill="#c8d4e4"/>
<rect x="30.5" y="824" width="1586.5" height="1.6" fill="#bcc3cf"/>
<rect x="30.5" y="842.6" width="1586.5" height="1" fill="#d6d9de"/>
<line x1="66.4" y1="825" x2="66.4" y2="842.6" stroke="#bac6d6" stroke-width="1"/>
<text x="69.8" y="839" font-size="10" fill="#aeb9c9" font-weight="normal" text-anchor="start" >20. Jan</text>
<line x1="279.8" y1="825" x2="279.8" y2="842.6" stroke="#bac6d6" stroke-width="1"/>
<text x="283.2" y="839" font-size="10" fill="#aeb9c9" font-weight="normal" text-anchor="start" >27. Jan</text>
<line x1="493.3" y1="825" x2="493.3" y2="842.6" stroke="#bac6d6" stroke-width="1"/>
<text x="496.7" y="839" font-size="10" fill="#aeb9c9" font-weight="normal" text-anchor="start" >3. Feb</text>
<line x1="706.7" y1="825" x2="706.7" y2="842.6" stroke="#bac6d6" stroke-width="1"/>
<text x="710.1" y="839" font-size="10" fill="#aeb9c9" font-weight="normal" text-anchor="start" >10. Feb</text>
<line x1="920.2" y1="825" x2="920.2" y2="842.6" stroke="#bac6d6" stroke-width="1"/>
<text x="923.6" y="839" font-size="10" fill="#aeb9c9" font-weight="normal" text-anchor="start" >17. Feb</text>
<line x1="1133.6" y1="825" x2="1133.6" y2="842.6" stroke="#bac6d6" stroke-width="1"/>
<text x="1137.0" y="839" font-size="10" fill="#aeb9c9" font-weight="normal" text-anchor="start" >24. Feb</text>
<line x1="1347.0" y1="825" x2="1347.0" y2="842.6" stroke="#bac6d6" stroke-width="1"/>
<text x="1350.4" y="839" font-size="10" fill="#aeb9c9" font-weight="normal" text-anchor="start" >3. Mar</text>
<line x1="1560.5" y1="825" x2="1560.5" y2="842.6" stroke="#bac6d6" stroke-width="1"/>
<text x="1563.9" y="839" font-size="10" fill="#aeb9c9" font-weight="normal" text-anchor="start" >10. Mar</text>
<rect x="26.95" y="826.4" width="7" height="14" rx="1.2" fill="#f4f4f4" stroke="#9a9a9a" stroke-width="1"/><line x1="29.25" y1="830.3" x2="29.25" y2="836.9" stroke="#555" stroke-width="0.9"/><line x1="31.45" y1="830.3" x2="31.45" y2="836.9" stroke="#555" stroke-width="0.9"/>
<rect x="1612.8" y="826.4" width="7" height="14" rx="1.2" fill="#f4f4f4" stroke="#9a9a9a" stroke-width="1"/><line x1="1615.1" y1="830.3" x2="1615.1" y2="836.9" stroke="#555" stroke-width="0.9"/><line x1="1617.3" y1="830.3" x2="1617.3" y2="836.9" stroke="#555" stroke-width="0.9"/>
<circle cx="1643" cy="775" r="18" fill="#fff" filter="url(#sh)"/>
<defs><filter id="sh" x="-50%" y="-50%" width="200%" height="200%"><feDropShadow dx="0" dy="0" stdDeviation="2.5" flood-color="#000" flood-opacity="0.12"/></filter></defs>
<g stroke="#333" stroke-width="1.1" fill="none"><line x1="1636.9" y1="769.6" x2="1649.6" y2="769.6"/><path d="M1643.1 781 V774.5" stroke-width="1.2"/></g><path d="M1641 775.2 L1643.1 772.4 L1645.2 775.2Z" fill="#333"/>
</svg>
</body></html>
